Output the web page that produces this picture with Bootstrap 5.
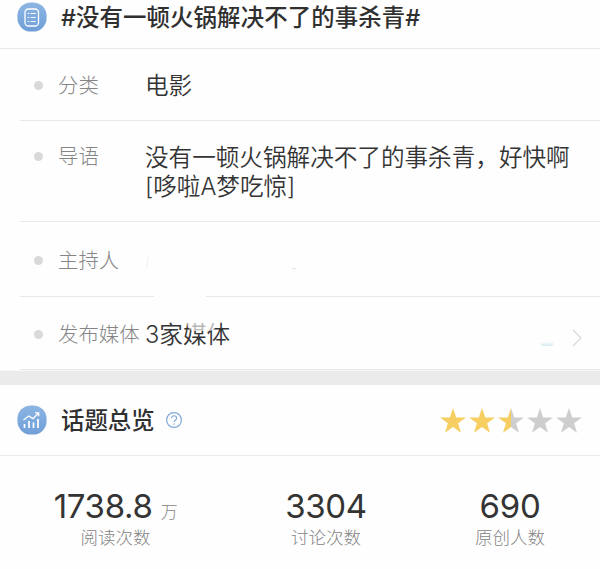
<!DOCTYPE html>
<html lang="zh-CN">
<head>
<meta charset="utf-8">
<meta name="viewport" content="width=device-width, initial-scale=1">
<title>话题总览</title>
<link href="https://cdn.jsdelivr.net/npm/bootstrap@5.3.0/dist/css/bootstrap.min.css" rel="stylesheet">
<style>
body{font-family:Inter,"Noto Sans CJK SC",sans-serif;color:#343434;background:#fefefe;overflow:hidden}
.topic-head{height:49px;padding:0 0 15px 17px;border-bottom:1px solid #e8e8e8}
.head-title{font-size:23.4px;font-weight:500;line-height:30px;margin-left:14px;padding-top:2px;color:#303030}
.topic-head .head-title{letter-spacing:.12px}
.info-row{margin-left:20px;padding-left:14px;border-bottom:1px solid #e8e8e8;line-height:29px;font-size:23.6px;font-weight:350}
.info-row.kind{height:72px;padding-top:22px}
.info-row.intro{height:101px;padding-top:22px}
.info-row.host{height:75px;padding-top:24px}
.info-row.media{height:73px;padding-top:23px}
.dot{width:9px;height:9px;border-radius:50%;background:#d9d9d9;margin-top:10px;margin-right:15px}
.intro .dot{margin-top:9px}
.info-label{width:87px;font-size:20.4px;color:#858585;font-weight:300;white-space:nowrap}
.intro .info-label{margin-top:-1px}
.erased{left:42px;top:1px;width:30px;height:10px;background:rgba(254,254,254,.65);border-radius:0 0 8px 8px}
.line-gap{left:134px;bottom:-1px;width:52px;height:1px;background:#fefefe}
.speck{width:4px;height:1px;background:#e2e2e2;left:272px;top:46px}
.faint-stroke{width:1px;height:11px;background:#f1f1f1;left:127px;top:34px;transform:rotate(10deg)}
.arc{width:14px;height:4px;border-radius:0 0 10px 10px;background:linear-gradient(#fefefe,#d2e8f0);margin:22px 17px 0 0}
.chev{margin:8px 17px 0 0}
.band{height:15px;background:#ebebeb;border-top:1px solid #f8f8f8}
.overview-head{height:71px;padding:0 18px 0 17px;border-bottom:1px solid #ebebeb}
.help{margin-left:9px}
.stats{padding-top:30px}
.stat-num{height:40px;font-size:33px;line-height:40px;letter-spacing:-.3px}
.stat-unit{font-size:17px;line-height:20px;color:#858585;font-weight:300;margin-left:8px}
.stat-label{font-size:17.5px;line-height:24px;color:#858585;font-weight:300}
.stat-a{width:231px}.stat-b{width:190px}.stat-c{width:178px}
</style>
<script src="https://cdn.jsdelivr.net/npm/bootstrap@5.3.0/dist/js/bootstrap.bundle.min.js"></script>
</head>
<body>
<svg width="0" height="0" class="position-absolute"><defs>
<linearGradient id="blue" x2="0" y2="1"><stop stop-color="#8cb5e3"/><stop offset="1" stop-color="#709fd8"/></linearGradient>
<linearGradient id="half"><stop offset=".5" stop-color="#f6ce61"/><stop offset=".5" stop-color="#cecece"/></linearGradient>
<path id="star" d="M13 0 16.2 9.4H26L18.1 15.2 21 24.8 13 19 5 24.8 7.9 15.2 0 9.4H9.8Z"/>
</defs></svg>
<header class="topic-head d-flex align-items-center">
<svg width="30" height="30" viewBox="0 0 30 30" fill="none" stroke="#fff"><rect x=".4" y=".4" width="29.2" height="29.2" rx="13.5" fill="url(#blue)" stroke="none"/><rect x="8" y="7" width="13.5" height="17" rx="3.5" stroke-width="1.3"/><path d="M10.7 11.5h1.6m1.3 0h5M10.7 15.5h1.6m1.3 0h5M10.7 19.5h1.6m1.3 0h5" stroke-width="1.2"/></svg>
<h1 class="head-title mb-0">#没有一顿火锅解决不了的事杀青#</h1>
</header>
<main>
<div class="info-row kind d-flex"><span class="dot"></span><span class="info-label">分类</span><span>电影</span></div>
<div class="info-row intro d-flex"><span class="dot"></span><span class="info-label">导语</span><span>没有一顿火锅解决不了的事杀青，好快啊<br>[哆啦A梦吃惊]</span></div>
<div class="info-row host d-flex position-relative"><span class="dot"></span><span class="info-label">主持人</span><i class="faint-stroke position-absolute"></i><i class="speck position-absolute"></i><i class="line-gap position-absolute"></i></div>
<div class="info-row media d-flex"><span class="dot"></span><span class="info-label">发布媒体</span><span class="position-relative">3家媒体<i class="erased position-absolute"></i></span>
<span class="arc ms-auto"></span><svg class="chev" width="12" height="20" viewBox="0 0 12 20" fill="none" stroke="#d8d8d8" stroke-width="1.1"><path d="M2 2 10 10 2 18"/></svg></div>
<div class="band"></div>
<section>
<div class="overview-head d-flex align-items-center">
<svg width="30" height="30" viewBox="0 0 30 30" fill="none" stroke="#fff"><rect x=".4" y=".4" width="29.2" height="29.2" rx="13.5" fill="url(#blue)" stroke="none"/><path d="M7.5 23v-4M12 23v-7M16.5 23v-5.5M21 23v-9" stroke-width="1.7"/><path d="m6.5 15 5.2-4 4.3 2.6 5.5-5.6M18 7.8h3.7v3.5" stroke-width="1.3"/></svg>
<h2 class="head-title mb-0">话题总览</h2>
<svg class="help flex-shrink-0" width="20" height="18" viewBox="0 0 20 18" fill="none" stroke="#82a9d8" stroke-width="1.2"><circle cx="10" cy="9" r="7.4"/><path d="M7.5 7.2c0-3.3 5.1-3.2 5.1 0 0 2-2.5 2-2.5 3.9"/><circle cx="10.1" cy="13.1" r=".4" fill="#82a9d8" stroke-width=".6"/></svg>
<svg class="ms-auto" width="142" height="25" viewBox="0 0 142 25"><g fill="#f6ce61"><use href="#star"/><use href="#star" x="29"/></g><use href="#star" x="58" fill="url(#half)"/><g fill="#cecece"><use href="#star" x="87"/><use href="#star" x="116"/></g></svg>
</div>
<div class="stats d-flex text-center">
<div class="stat-a"><div class="stat-num">1738.8<span class="stat-unit">万</span></div><div class="stat-label">阅读次数</div></div>
<div class="stat-b"><div class="stat-num">3304</div><div class="stat-label">讨论次数</div></div>
<div class="stat-c"><div class="stat-num">690</div><div class="stat-label">原创人数</div></div>
</div>
</section>
</main>
</body>
</html>
